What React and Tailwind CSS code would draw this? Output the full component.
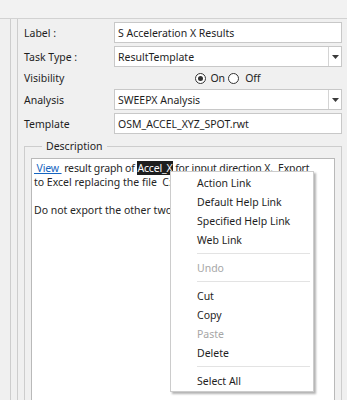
export default function App() {
  const Arrow = () => (
    <svg width="7" height="4" viewBox="0 0 7 4">
      <path d="M0 0H7L3.5 4Z" fill="#3a3a3a" />
    </svg>
  );
  const MenuItem = ({ children, disabled }) => (
    <div className={`h-[19px] pl-[26px] flex items-center ${disabled ? "text-[#a6a6a6]" : "text-[#1e1e1e]"}`}>
      {children}
    </div>
  );
  const Sep = () => (
    <div className="h-[9px] pl-[26px] pr-[3px] flex items-center">
      <div className="h-px flex-1 bg-[#e3e3e3]" />
    </div>
  );
  return (
    <div className="relative w-[347px] h-[400px] overflow-hidden bg-[#f0f0f0] text-[10.5px] leading-[16px] text-[#1e1e1e] font-['Noto_Sans',sans-serif]">
      <div className="h-[19px] border-b border-[#d2d2d2] bg-[#f2f2f2]" />
      <div className="flex h-[381px]">
        <div className="w-[11px] shrink-0 border-r border-[#cdcdcd]" />
        <div className="w-[6px] shrink-0" />
        <div className="flex-1 min-w-0 border-l border-[#cdcdcd] pl-[6px] pr-[5px] pt-[3px] flex flex-col">
          <div className="flex flex-col gap-[3px]">
            <div className="flex h-[21px] items-center">
              <div className="w-[90px] shrink-0">Label :</div>
              <div className="flex-1 min-w-0 h-full border border-[#c8c8c8] bg-white pl-[3px] flex items-center">S Acceleration X Results</div>
            </div>
            <div className="flex h-[21px] items-center">
              <div className="w-[90px] shrink-0">Task Type :</div>
              <div className="flex-1 min-w-0 h-full border border-[#c8c8c8] bg-white flex">
                <div className="flex-1 pl-[3px] flex items-center">ResultTemplate</div>
                <div className="w-[13px] border-l border-[#d4d4d4] flex items-center justify-center"><Arrow /></div>
              </div>
            </div>
            <div className="flex h-[16px] items-center">
              <div className="w-[90px] shrink-0">Visibility</div>
              <div className="flex-1 flex items-center justify-center">
                <div className="w-[11px] h-[11px] rounded-full border border-[#333] flex items-center justify-center mr-[4px] bg-white">
                  <div className="w-[5px] h-[5px] rounded-full bg-[#333]" />
                </div>
                <span className="mr-[3px]">On</span>
                <div className="w-[11px] h-[11px] rounded-full border border-[#333] mr-[6px] bg-white" />
                <span>Off</span>
              </div>
            </div>
            <div className="flex h-[21px] items-center">
              <div className="w-[90px] shrink-0">Analysis</div>
              <div className="flex-1 min-w-0 h-full border border-[#c8c8c8] bg-white flex">
                <div className="flex-1 pl-[3px] flex items-center">SWEEPX Analysis</div>
                <div className="w-[13px] border-l border-[#d4d4d4] flex items-center justify-center"><Arrow /></div>
              </div>
            </div>
            <div className="flex h-[21px] items-center">
              <div className="w-[90px] shrink-0">Template</div>
              <div className="flex-1 min-w-0 h-full border border-[#c8c8c8] bg-white pl-[3px] flex items-center">OSM_ACCEL_XYZ_SPOT.rwt</div>
            </div>
          </div>
          <fieldset className="mt-[4px] min-w-0 border border-[#cdcdcd] px-[6px] pt-[4px]">
            <legend className="ml-[11px] px-[4px]">Description</legend>
            <div className="h-[300px] border border-[#b9b9b9] bg-white pl-[2px] pt-[2px] leading-[14px] text-[#262626] whitespace-pre overflow-hidden">
              <div className="tracking-[-0.15px]">
                <span className="text-[#1565c0] underline decoration-[#1565c0]"> View </span>
                <span> result graph of </span>
                <span className="bg-[#1e1e1e] text-white">Accel_X</span>
                <span> for input direction X.  Export</span>
              </div>
              <div>to Excel replacing the file  C:\Temp.</div>
              <div>&nbsp;</div>
              <div>Do not export the other two axes.</div>
            </div>
          </fieldset>
        </div>
      </div>
      <div className="absolute left-[170px] top-[171px] w-[144px] border border-[#cccccc] bg-white pt-[1px] pb-[1px] shadow-[2px_2px_2px_rgba(0,0,0,0.3)]">
        <MenuItem>Action Link</MenuItem>
        <MenuItem>Default Help Link</MenuItem>
        <MenuItem>Specified Help Link</MenuItem>
        <MenuItem>Web Link</MenuItem>
        <Sep />
        <MenuItem disabled>Undo</MenuItem>
        <Sep />
        <MenuItem>Cut</MenuItem>
        <MenuItem>Copy</MenuItem>
        <MenuItem disabled>Paste</MenuItem>
        <MenuItem>Delete</MenuItem>
        <Sep />
        <MenuItem>Select All</MenuItem>
      </div>
    </div>
  );
}
